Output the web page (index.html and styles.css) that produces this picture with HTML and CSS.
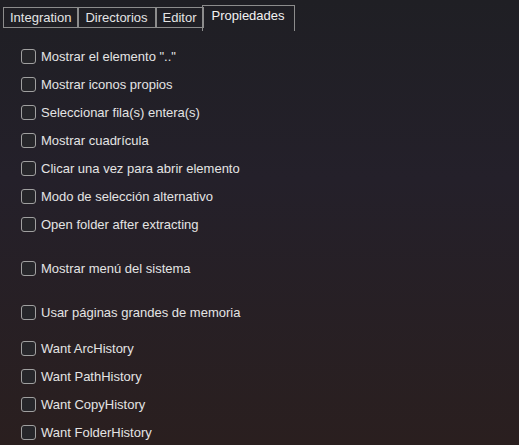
FILE: index.html
```html
<!DOCTYPE html>
<html>
	<head>
		<meta charset="utf-8">
		<title>Propiedades</title>
		<link rel="stylesheet" href="styles.css">
	</head>
	<body>
		<div id="tabs">
			<div class="tab">Integration</div>
			<div class="tab">Directorios</div>
			<div class="tab">Editor</div>
			<div class="tab active">Propiedades</div>
		</div>

		<div id="options">
			<label class="row"><span class="box"></span>Mostrar el elemento ".."</label>
			<label class="row"><span class="box"></span>Mostrar iconos propios</label>
			<label class="row"><span class="box"></span>Seleccionar fila(s) entera(s)</label>
			<label class="row"><span class="box"></span>Mostrar cuadrícula</label>
			<label class="row"><span class="box"></span>Clicar una vez para abrir elemento</label>
			<label class="row"><span class="box"></span>Modo de selección alternativo</label>
			<label class="row gap-lg"><span class="box"></span>Open folder after extracting</label>
			<label class="row gap-lg"><span class="box"></span>Mostrar menú del sistema</label>
			<label class="row gap-sm"><span class="box"></span>Usar páginas grandes de memoria</label>
			<label class="row"><span class="box"></span>Want ArcHistory</label>
			<label class="row"><span class="box"></span>Want PathHistory</label>
			<label class="row"><span class="box"></span>Want CopyHistory</label>
			<label class="row"><span class="box"></span>Want FolderHistory</label>
		</div>
	</body>
</html>
```

FILE: styles.css
```css
:root {
	--text: #e4e4e4;
	--line: #8c8c8c;
	--box: #a0a0a0;
	--box-bg: #26262a;
}

html, body {
	height: 100%;
}

body {
	margin: 0;
	background: linear-gradient(to bottom, #1f1f24 0%, #24202a 40%, #2a1f1f 100%);
	font-family: 'Liberation Sans', Arial, sans-serif;
	font-size: 13px;
	color: var(--text);
	overflow: hidden;
}

#tabs {
	display: flex;
	align-items: flex-start;
	padding: 5px 0 0 3px;
	height: 25px;
}

.tab {
	box-sizing: border-box;
	height: 21px;
	margin-top: 2px;
	padding: 0 6px;
	border: 1px solid var(--line);
	line-height: 19px;
	white-space: nowrap;
}

.tab:nth-child(2) {
	padding: 0 7px 0 6px;
}

.tab.active {
	height: 26px;
	margin-top: 0;
	margin-left: -2px;
	padding: 0 9px 0 9px;
	border-bottom: none;
	line-height: 19px;
	color: #f2f2f2;
}

#options {
	display: flex;
	flex-direction: column;
	padding: 12px 0 0 21px;
}

.row {
	display: flex;
	align-items: center;
	gap: 5px;
	height: 28px;
	white-space: nowrap;
}

.row.gap-lg {
	margin-bottom: 16px;
}

.row.gap-sm {
	margin-bottom: 8px;
}

.box {
	box-sizing: border-box;
	width: 15px;
	height: 15px;
	border: 1px solid var(--box);
	border-radius: 3px;
	background-color: var(--box-bg);
}
```
